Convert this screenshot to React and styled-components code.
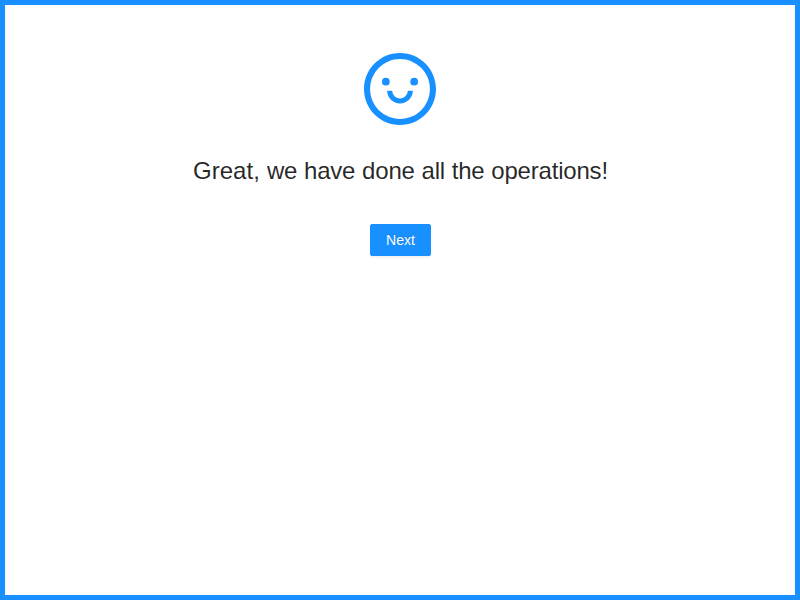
import React from 'react';
import styled, { createGlobalStyle } from 'styled-components';

const GlobalStyle = createGlobalStyle`
  *, *::before, *::after { box-sizing: border-box; }
  body {
    margin: 0;
    background: #fff;
    font-family: "Liberation Sans", Arial, sans-serif;
    font-size: 14px;
    line-height: 1.5715;
    color: rgba(0, 0, 0, 0.85);
  }
`;

const Frame = styled.main`
  height: 100vh;
  border: 5px solid #1890ff;
  background: #fff;
`;

const Result = styled.section`
  padding: 48px 32px;
  text-align: center;
`;

const ResultIcon = styled.div`
  margin-bottom: 24px;
  font-size: 72px;
  line-height: 1;
  color: #1890ff;

  svg {
    display: block;
    width: 1em;
    height: 1em;
    margin: 0 auto;
  }
`;

const Title = styled.div`
  padding-left: 0.8px;
  font-size: 24px;
  line-height: 1.8;
  letter-spacing: -0.2px;
  word-spacing: 0.35px;
`;

const Lead = styled.span`
  letter-spacing: 0.04px;
`;

const Extra = styled.div`
  margin: 32px 0 0;
`;

const Button = styled.button`
  display: inline-block;
  width: 61px;
  height: 32px;
  padding: 4px 14.5px 4px 15.5px;
  border: 1px solid #1890ff;
  border-radius: 2px;
  background: #1890ff;
  color: #fff;
  font: inherit;
  letter-spacing: 0.05px;
  white-space: nowrap;
  text-shadow: 0 -1px 0 rgba(0, 0, 0, 0.12);
  box-shadow: 0 2px 0 rgba(0, 0, 0, 0.045);
  cursor: pointer;
`;

const SmileIcon = () => (
  <svg viewBox="64 64 896 896" fill="currentColor" aria-hidden="true">
    <path d="M288 421a48 48 0 1096 0 48 48 0 10-96 0zm352 0a48 48 0 1096 0 48 48 0 10-96 0zM512 64C264.600 64 64 264.600 64 512s200.600 448 448 448 448-200.600 448-448S759.400 64 512 64zm263 711c-34.200 34.200-74 61-118.300 79.800C611 874.200 562.300 884 512 884c-50.300 0-99-9.800-144.800-29.200A370.400 370.400 0 01248.900 775c-34.200-34.200-61-74-79.800-118.300C149.800 611 140 562.300 140 512s9.800-99 29.200-144.800A370.400 370.400 0 01249 248.900c34.200-34.200 74-61 118.300-79.800C413 149.800 461.700 140 512 140c50.300 0 99 9.800 144.800 29.200A370.400 370.400 0 01775.100 249c34.200 34.200 61 74 79.800 118.300C874.200 413 884 461.700 884 512s-9.800 99-29.200 144.800A368.890 368.890 0 01775 775zM664 533h-48.100c-4.200 0-7.800 3.200-8.100 7.400C604 589.900 562.500 629 512 629s-92.100-39.100-95.800-88.600c-.3-4.200-3.900-7.400-8.100-7.400H360a8 8 0 00-8 8.400c4.400 84.300 74.500 151.600 160 151.600s155.600-67.300 160-151.600a8 8 0 00-8-8.400z" />
  </svg>
);

export default function App() {
  return (
    <>
      <GlobalStyle />
      <Frame>
        <Result>
          <ResultIcon>
            <SmileIcon />
          </ResultIcon>
          <Title>
            <Lead>Great, </Lead>we have done all the operations!
          </Title>
          <Extra>
            <Button type="button">Next</Button>
          </Extra>
        </Result>
      </Frame>
    </>
  );
}
